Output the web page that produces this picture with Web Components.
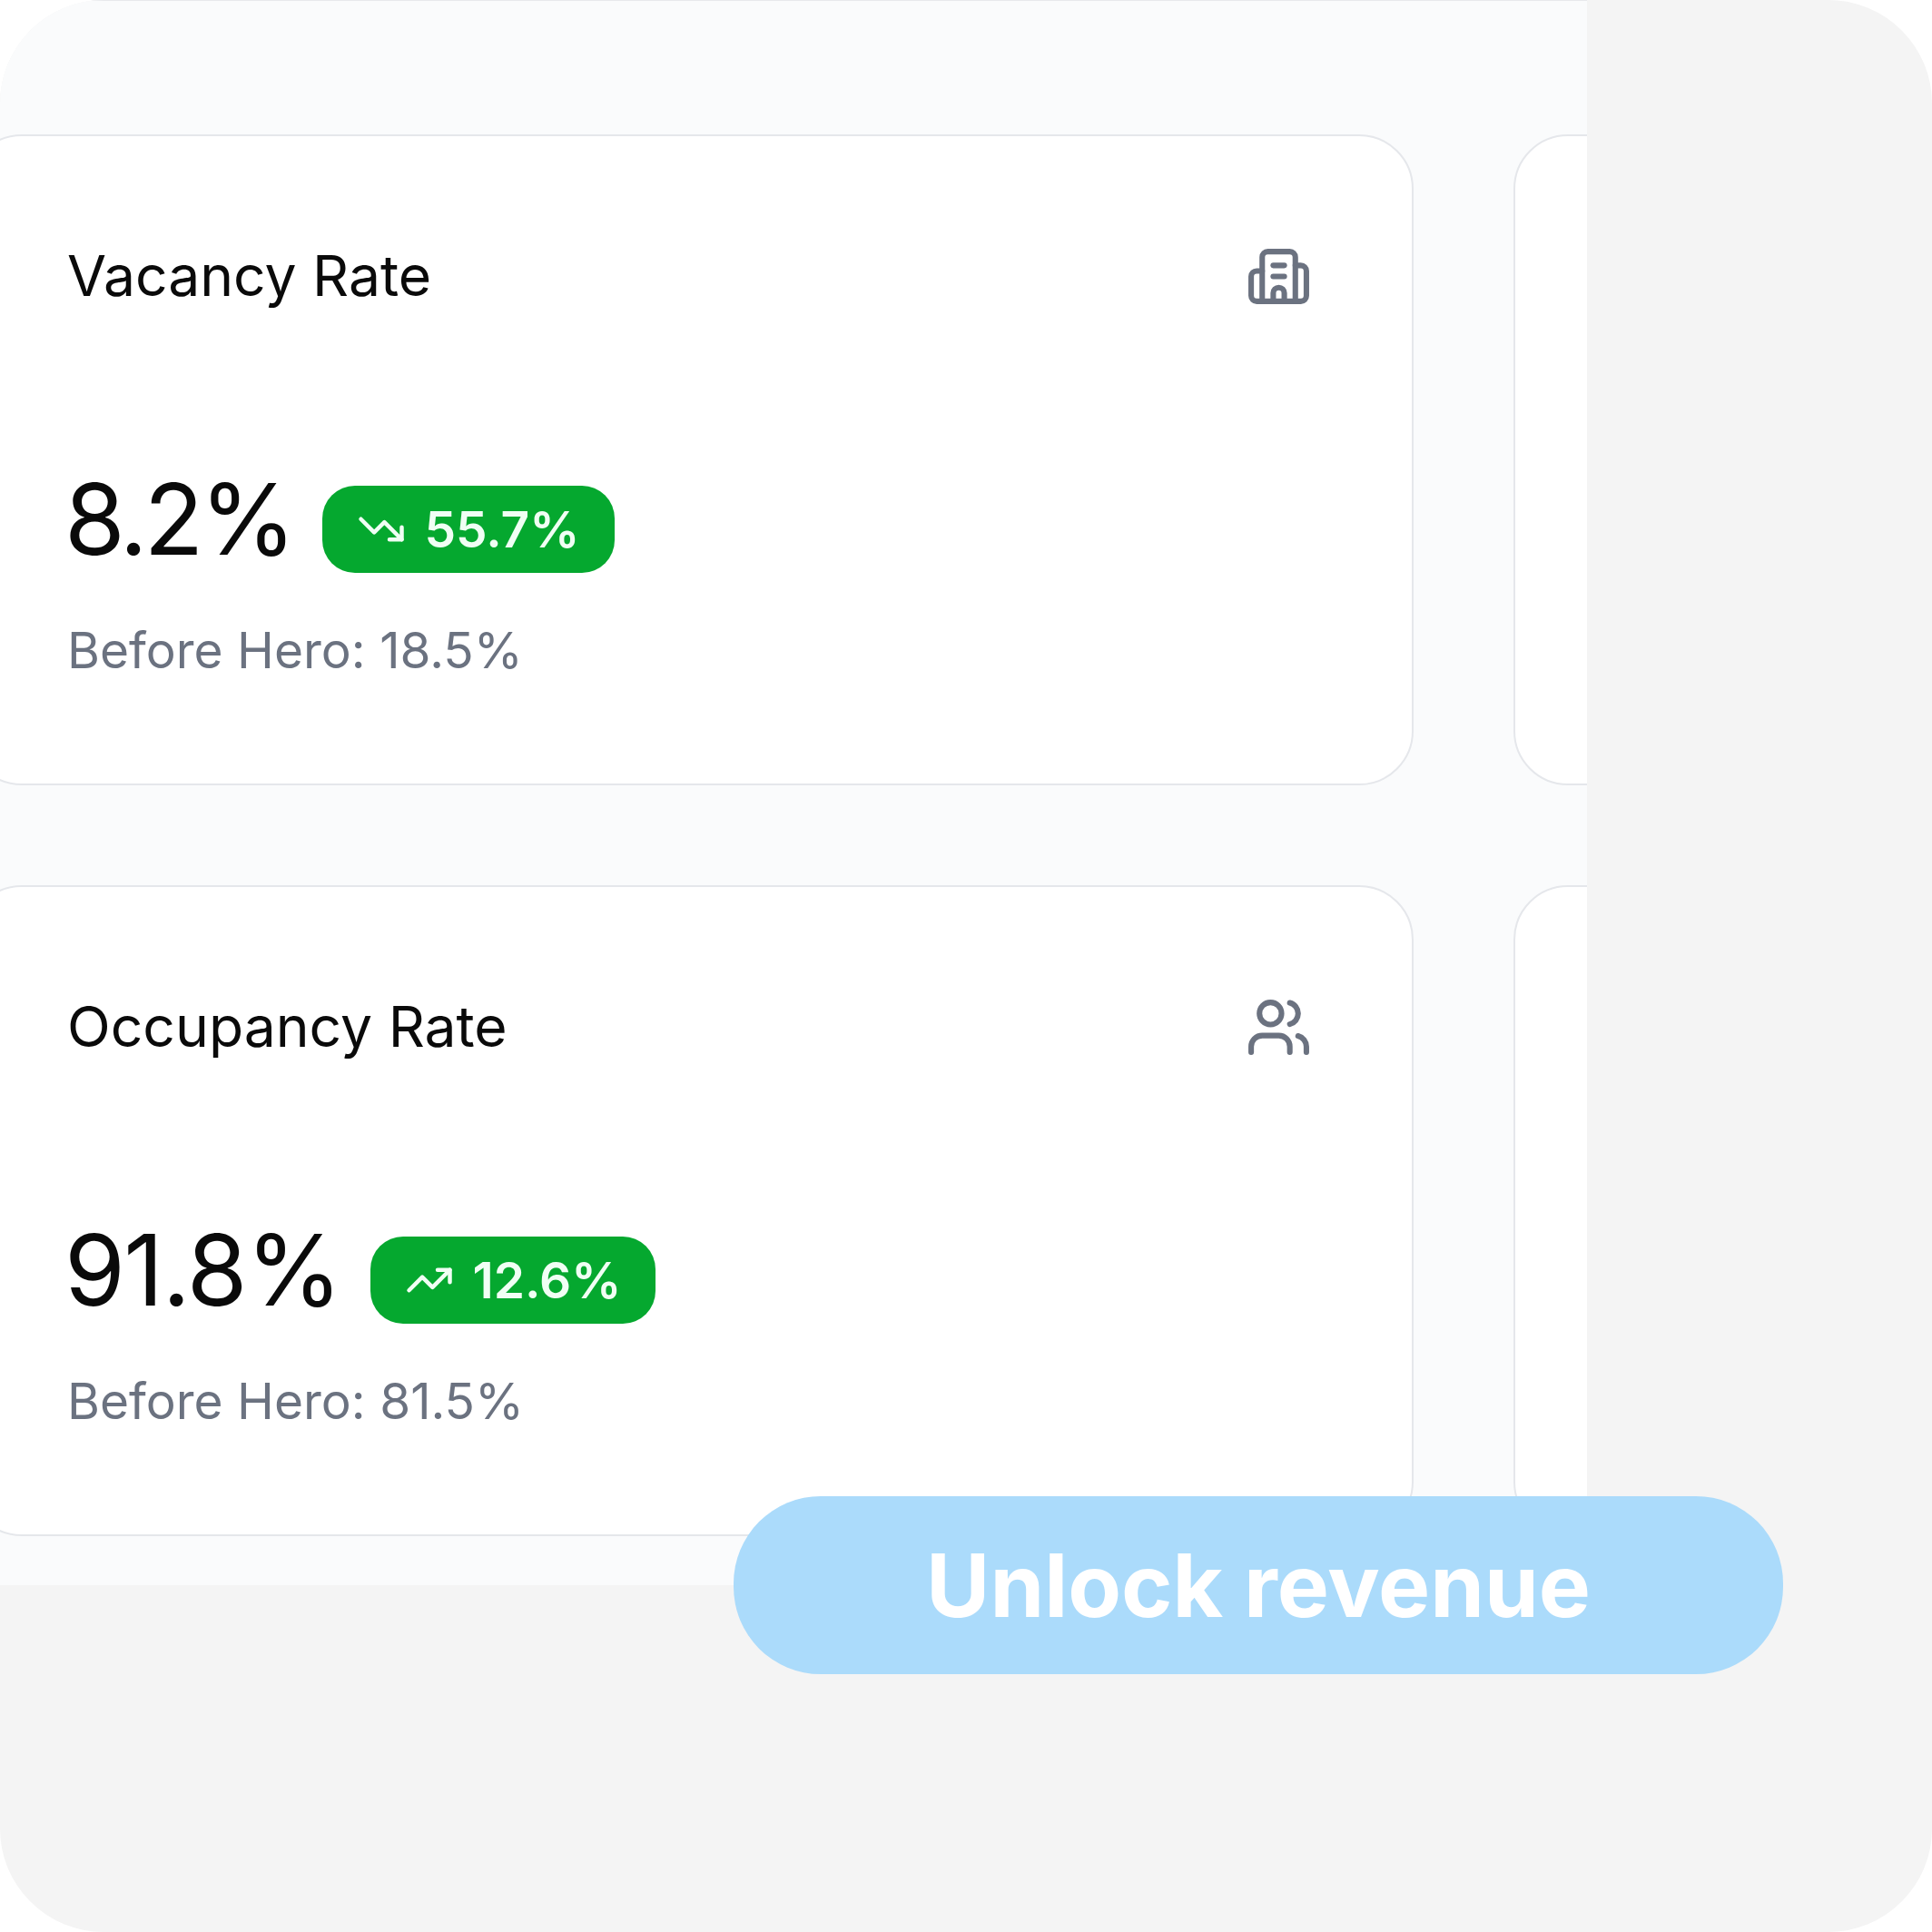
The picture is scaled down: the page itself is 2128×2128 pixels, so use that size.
<!doctype html>
<html>
<head>
<meta charset="utf-8">
<title>Unlock revenue</title>
<style>
  html, body { margin: 0; background: #fff; }
  body { font-family: Inter, "Liberation Sans", sans-serif; }
</style>
</head>
<body>
<hero-frame>
  <metric-card>
    <span slot="title">Vacancy Rate</span>
    <hero-icon slot="icon" name="building"></hero-icon>
    <span slot="value" style="letter-spacing: -4px">8.2%</span>
    <trend-badge slot="badge" direction="down">55.7%</trend-badge>
    <span slot="note">Before Hero: 18.5%</span>
  </metric-card>
  <metric-card></metric-card>
  <metric-card>
    <span slot="title">Occupancy Rate</span>
    <hero-icon slot="icon" name="users"></hero-icon>
    <span slot="value" style="letter-spacing: -1.6px">91.8%</span>
    <trend-badge slot="badge" direction="up">12.6%</trend-badge>
    <span slot="note">Before Hero: 81.5%</span>
  </metric-card>
  <metric-card></metric-card>
  <cta-button slot="cta">Unlock revenue</cta-button>
</hero-frame>

<script>
// Icon paths, 24x24 stroke icons
const ICONS = {
  building: `
    <path d="M10 12h4"/><path d="M10 8h4"/>
    <path d="M14 21v-3a2 2 0 0 0-4 0v3"/>
    <path d="M6 10H4a2 2 0 0 0-2 2v7a2 2 0 0 0 2 2h16a2 2 0 0 0 2-2v-9a2 2 0 0 0-2-2h-2"/>
    <path d="M6 21V5a2 2 0 0 1 2-2h8a2 2 0 0 1 2 2v16"/>`,
  users: `
    <path d="M16 21v-2a4 4 0 0 0-4-4H6a4 4 0 0 0-4 4v2"/>
    <circle cx="9" cy="7" r="4"/>
    <path d="M22 21v-2a4 4 0 0 0-3-3.87"/>
    <path d="M16 3.13a4 4 0 0 1 0 7.75"/>`,
  down: `<polyline points="22 17 13.5 8.5 8.5 13.5 2 7"/><polyline points="16 17 22 17 22 11"/>`,
  up: `<polyline points="22 7 13.5 15.5 8.5 10.5 2 17"/><polyline points="16 7 22 7 22 13"/>`,
}

class HeroIcon extends HTMLElement {
  constructor() {
    super()
    this.attachShadow({ mode: 'open' })
  }

  connectedCallback() {
    this.shadowRoot.innerHTML = `
      <style>
        :host { display: block; width: 73px; height: 73px; color: #6b7280; }
        svg { display: block; width: 100%; height: 100%; }
      </style>
      <svg viewBox="0 0 24 24" fill="none" stroke="currentColor" stroke-width="2"
        stroke-linecap="round" stroke-linejoin="round">${ICONS[this.getAttribute('name')]}</svg>
    `
  }
}

class TrendBadge extends HTMLElement {
  constructor() {
    super()
    this.attachShadow({ mode: 'open' })
  }

  connectedCallback() {
    this.shadowRoot.innerHTML = `
      <style>
        :host {
          display: inline-flex;
          align-items: center;
          gap: 20px;
          height: 96px;
          box-sizing: border-box;
          padding: 0 38px;
          border-radius: 36px;
          background: #05a82f;
          color: #f0fff4;
          font-size: 55px;
          font-weight: 600;
        }
        svg { display: block; width: 54px; height: 54px; flex: none; }
      </style>
      <svg viewBox="0 0 24 24" fill="none" stroke="currentColor" stroke-width="2"
        stroke-linecap="round" stroke-linejoin="round">${ICONS[this.getAttribute('direction')]}</svg>
      <slot></slot>
    `
  }
}

class MetricCard extends HTMLElement {
  constructor() {
    super()
    this.attachShadow({ mode: 'open' })
  }

  connectedCallback() {
    this.shadowRoot.innerHTML = `
      <style>
        :host {
          display: block;
          box-sizing: border-box;
          height: 717px;
          padding: 118px 110px 0 108px;
          background: #fff;
          border: 2px solid #e5e7eb;
          border-radius: 60px;
          color: #0a0a0a;
        }
        .head {
          display: flex;
          align-items: center;
          justify-content: space-between;
          height: 73px;
        }
        .title { font-size: 62.4px; line-height: 69px; margin-top: -3px; }
        .row {
          display: flex;
          align-items: flex-end;
          gap: 33px;
          margin-top: 172px;
        }
        .value { font-size: 108px; line-height: 118px; margin-left: -3px; }
        .note {
          margin-top: 53px;
          color: #6b7280;
          font-size: 55px;
          line-height: 64px;
        }
      </style>
      <div class="head">
        <div class="title"><slot name="title"></slot></div>
        <slot name="icon"></slot>
      </div>
      <div class="row">
        <div class="value"><slot name="value"></slot></div>
        <slot name="badge"></slot>
      </div>
      <div class="note"><slot name="note"></slot></div>
    `
  }
}

class CtaButton extends HTMLElement {
  constructor() {
    super()
    this.attachShadow({ mode: 'open' })
  }

  connectedCallback() {
    this.shadowRoot.innerHTML = `
      <style>
        :host {
          position: absolute;
          left: 808px;
          top: 1648px;
          width: 1156px;
          height: 196px;
          display: flex;
          align-items: center;
          justify-content: center;
          border-radius: 96px;
          background: #abdbfb;
          color: #fff;
          font-size: 96px;
          font-weight: 700;
        }
      </style>
      <slot></slot>
    `
  }
}

class HeroFrame extends HTMLElement {
  constructor() {
    super()
    this.attachShadow({ mode: 'open' })
  }

  connectedCallback() {
    this.shadowRoot.innerHTML = `
      <style>
        :host {
          display: block;
          position: relative;
          width: 2128px;
          height: 2128px;
          overflow: hidden;
          border-radius: 114px;
          background: #f4f4f4;
        }
        .panel {
          box-sizing: border-box;
          width: 1748px;
          height: 1746px;
          overflow: hidden;
          padding-top: 147px;
          background: #fafbfc;
          border-top: 1px solid #e8e9ec;
        }
        .grid {
          display: grid;
          grid-template-columns: 1593px 1593px;
          gap: 110px;
          margin-left: -36px;
        }
      </style>
      <div class="panel"><div class="grid"><slot></slot></div></div>
      <slot name="cta"></slot>
    `
  }
}

customElements.define('hero-icon', HeroIcon)
customElements.define('trend-badge', TrendBadge)
customElements.define('metric-card', MetricCard)
customElements.define('cta-button', CtaButton)
customElements.define('hero-frame', HeroFrame)
</script>
</body>
</html>
